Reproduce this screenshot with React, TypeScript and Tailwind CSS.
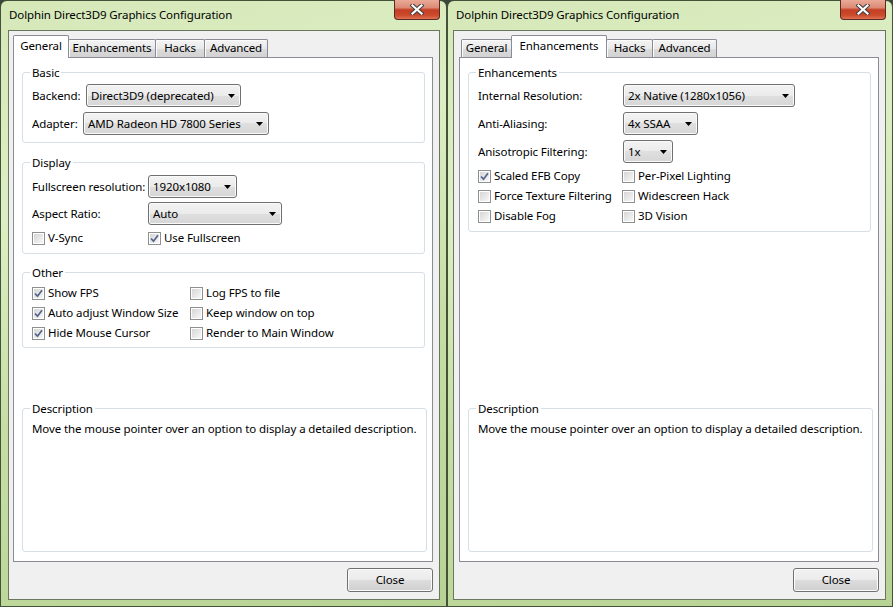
import { FC, ReactNode } from "react";

const Combo: FC<{ value: string; className: string }> = ({ value, className }) => (
  <div
    className={`flex h-[23px] items-center justify-between rounded-[3px] border border-[#707070] bg-[linear-gradient(#f3f3f3_0%,#ebebeb_50%,#dfdfdf_50%,#d6d6d6_100%)] pl-[4px] pr-[5px] shadow-[inset_0_0_0_1px_#fafafa] ${className}`}
  >
    <span className="leading-[16px]">{value}</span>
    <svg width="7" height="4" viewBox="0 0 7 4">
      <path d="M0 0h7L3.5 4z" fill="#000" />
    </svg>
  </div>
);

const Check: FC<{ label: string; checked?: boolean; className?: string }> = ({
  label,
  checked,
  className,
}) => (
  <div className={`flex h-[20px] items-center gap-[3px] ${className ?? ""}`}>
    <div className="flex h-[13px] w-[13px] items-center justify-center border border-[#8e8f8f] bg-white p-[1px]">
      <div className="flex h-full w-full items-center justify-center bg-[linear-gradient(135deg,#d6d6d6,#f7f7f7)]">
        {checked && (
          <svg width="9" height="9" viewBox="0 0 9 9">
            <path d="M1 4.5 3.5 7.2 8 1.2" fill="none" stroke="#52648f" strokeWidth="1.7" />
          </svg>
        )}
      </div>
    </div>
    <span className="leading-[16px]">{label}</span>
  </div>
);

const Group: FC<{ title: string; className?: string; children: ReactNode }> = ({
  title,
  className,
  children,
}) => (
  <fieldset className={`rounded-[3px] border border-[#d5dfe5] px-[9px] ${className ?? ""}`}>
    <legend className="ml-[-2px] px-[2px] leading-[15px]">{title}</legend>
    {children}
  </fieldset>
);

const Tab: FC<{ label: string; selected?: boolean; className: string }> = ({
  label,
  selected,
  className,
}) =>
  selected ? (
    <div
      className={`relative z-10 -mb-px flex h-[23px] justify-center rounded-t-[2px] border border-b-0 border-[#898c95] bg-white pt-[2px] leading-[16px] ${className}`}
    >
      {label}
    </div>
  ) : (
    <div
      className={`flex h-[18px] justify-center rounded-t-[2px] border border-b-0 border-[#898c95] bg-[linear-gradient(#f4f4f4,#e9e9e9_50%,#dcdcdc_50%,#d2d2d2)] leading-[16px] shadow-[inset_1px_1px_0_#fcfcfc] ${className}`}
    >
      {label}
    </div>
  );

const CaptionClose: FC = () => (
  <div className="-mt-px ml-auto mr-[6px] flex h-[20px] w-[46px] items-center justify-center rounded-b-[4px] border border-t-0 border-[#5b2a22] bg-[linear-gradient(#e9ab98_0%,#dc8a74_40%,#c43e24_52%,#cc4a2c_80%,#e07153_100%)]">
    <svg width="14" height="11" viewBox="0 0 14 11">
      <path d="M2.5 1.5 11.5 9.5M11.5 1.5 2.5 9.5" stroke="#3f3f3f" strokeWidth="4.2" strokeLinecap="square" />
      <path d="M2.5 1.5 11.5 9.5M11.5 1.5 2.5 9.5" stroke="#ffffff" strokeWidth="2.2" strokeLinecap="square" />
    </svg>
  </div>
);

const Window: FC<{
  tabs: ReactNode;
  children: ReactNode;
  className: string;
  clientClassName: string;
  pageClassName: string;
}> = ({ tabs, children, className, clientClassName, pageClassName }) => (
  <div
    className={`flex h-[607px] flex-col rounded-t-[7px] border border-[#45523a] bg-[linear-gradient(165deg,#d6e8b8_0%,#dcefc4_30%,#c6dea4_60%,#b7d394_100%)] ${className}`}
  >
    <div className="flex h-[29px] items-start">
      <span className="pl-[8px] pt-[6px] leading-[16px]">Dolphin Direct3D9 Graphics Configuration</span>
      <CaptionClose />
    </div>
    <div
      className={`flex h-[570px] flex-col border border-[#6a775e] bg-[#f0f0f0] pb-[7px] pt-[4px] ${clientClassName}`}
    >
      <div className={`flex flex-1 flex-col ${pageClassName}`}>
        <div className="flex items-end">{tabs}</div>
        <div className="flex flex-1 flex-col border border-[#898c95] bg-white pb-[9px] pl-[8px] pr-[7px] pt-[7px]">
          {children}
          <Group title="Description" className="mt-auto h-[151px]">
            <p className="mt-[5px] whitespace-nowrap leading-[16px]">
              Move the mouse pointer over an option to display a detailed description.
            </p>
          </Group>
        </div>
        <div className="mt-[6px] flex justify-end">
          <button className="h-[24px] w-[86px] rounded-[3px] border border-[#707070] bg-[linear-gradient(#f2f2f2_0%,#ebebeb_50%,#dddddd_50%,#cfcfcf_100%)] leading-[16px] shadow-[inset_0_0_0_1px_#fbfbfb]">
            Close
          </button>
        </div>
      </div>
    </div>
  </div>
);

const App: FC = () => {
  return (
    <div className="flex h-[607px] w-[893px] overflow-hidden bg-[#3b463a] font-['Noto_Sans',sans-serif] text-[11.5px] tracking-[-0.1px] text-black">
      <Window
        className="w-[447px]"
        clientClassName="ml-[7px] mr-[6px]"
        pageClassName="ml-[4px] mr-[6px]"
        tabs={
          <>
            <Tab label="General" selected className="w-[56px]" />
            <Tab label="Enhancements" className="-ml-px w-[88px]" />
            <Tab label="Hacks" className="-ml-px w-[50px]" />
            <Tab label="Advanced" className="-ml-px w-[64px]" />
          </>
        }
      >
        <Group title="Basic" className="pb-[7px]">
          <div className="mt-[4px] flex flex-col gap-[5px]">
            <div className="flex items-center">
              <span className="w-[54px]">Backend:</span>
              <Combo value="Direct3D9 (deprecated)" className="w-[155px]" />
            </div>
            <div className="flex items-center">
              <span className="w-[51px]">Adapter:</span>
              <Combo value="AMD Radeon HD 7800 Series" className="w-[186px]" />
            </div>
          </div>
        </Group>
        <Group title="Display" className="mt-[12px] pb-[5px]">
          <div className="mt-[5px] flex flex-col gap-[4px]">
            <div className="flex items-center">
              <span className="w-[116px]">Fullscreen resolution:</span>
              <Combo value="1920x1080" className="w-[89px]" />
            </div>
            <div className="flex items-center">
              <span className="w-[116px]">Aspect Ratio:</span>
              <Combo value="Auto" className="w-[134px]" />
            </div>
          </div>
          <div className="mt-[3px] flex">
            <Check label="V-Sync" className="w-[116px]" />
            <Check label="Use Fullscreen" checked />
          </div>
        </Group>
        <Group title="Other" className="mt-[11px] pb-[4px]">
          <div className="mt-[3px] grid grid-cols-[158px_1fr]">
            <Check label="Show FPS" checked />
            <Check label="Log FPS to file" />
            <Check label="Auto adjust Window Size" checked />
            <Check label="Keep window on top" />
            <Check label="Hide Mouse Cursor" checked />
            <Check label="Render to Main Window" />
          </div>
        </Group>
      </Window>
      <Window
        className="w-[446px]"
        clientClassName="ml-[5px] mr-[6px]"
        pageClassName="ml-[5px] mr-[6px]"
        tabs={
          <>
            <Tab label="General" className="ml-[2px] w-[51px]" />
            <Tab label="Enhancements" selected className="-ml-px w-[96px]" />
            <Tab label="Hacks" className="-ml-px w-[47px]" />
            <Tab label="Advanced" className="-ml-px w-[65px]" />
          </>
        }
      >
        <Group title="Enhancements" className="pb-[5px]">
          <div className="mt-[4px] flex flex-col gap-[5px]">
            <div className="flex items-center">
              <span className="w-[145px]">Internal Resolution:</span>
              <Combo value="2x Native (1280x1056)" className="w-[172px]" />
            </div>
            <div className="flex items-center">
              <span className="w-[145px]">Anti-Aliasing:</span>
              <Combo value="4x SSAA" className="w-[75px]" />
            </div>
            <div className="flex items-center">
              <span className="w-[145px]">Anisotropic Filtering:</span>
              <Combo value="1x" className="w-[50px]" />
            </div>
          </div>
          <div className="mt-[3px] grid grid-cols-[144px_1fr]">
            <Check label="Scaled EFB Copy" checked />
            <Check label="Per-Pixel Lighting" />
            <Check label="Force Texture Filtering" />
            <Check label="Widescreen Hack" />
            <Check label="Disable Fog" />
            <Check label="3D Vision" />
          </div>
        </Group>
      </Window>
    </div>
  );
};

export default App;
